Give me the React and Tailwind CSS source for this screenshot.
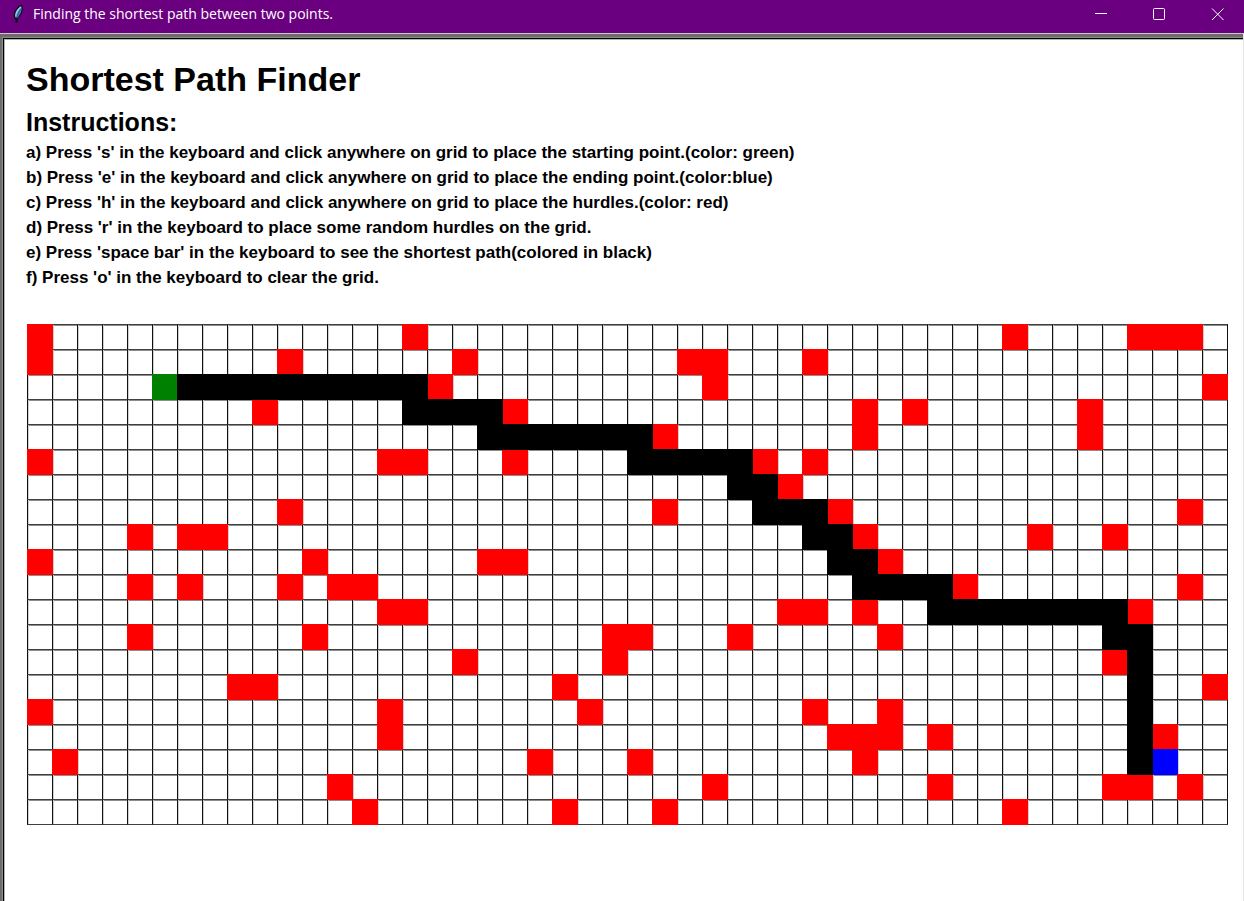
const COLUMNS = 48;

// One list per row of [column, symbols]: "#" hurdle, "*" path, "S" start, "E" end.
const RUNS = [
  [[0, "#"], [15, "#"], [39, "#"], [44, "###"]],
  [[0, "#"], [10, "#"], [17, "#"], [26, "##"], [31, "#"]],
  [[5, "S**********#"], [27, "#"], [47, "#"]],
  [[9, "#"], [15, "****#"], [33, "#"], [35, "#"], [42, "#"]],
  [[18, "*******#"], [33, "#"], [42, "#"]],
  [[0, "#"], [14, "##"], [19, "#"], [24, "*****#"], [31, "#"]],
  [[28, "**#"]],
  [[10, "#"], [25, "#"], [29, "***#"], [46, "#"]],
  [[4, "#"], [6, "##"], [31, "**#"], [40, "#"], [43, "#"]],
  [[0, "#"], [11, "#"], [18, "##"], [32, "**#"]],
  [[4, "#"], [6, "#"], [10, "#"], [12, "##"], [33, "****#"], [46, "#"]],
  [[14, "##"], [30, "##"], [33, "#"], [36, "********#"]],
  [[4, "#"], [11, "#"], [23, "##"], [28, "#"], [34, "#"], [43, "**"]],
  [[17, "#"], [23, "#"], [43, "#*"]],
  [[8, "##"], [21, "#"], [44, "*"], [47, "#"]],
  [[0, "#"], [14, "#"], [22, "#"], [31, "#"], [34, "#"], [44, "*"]],
  [[14, "#"], [32, "###"], [36, "#"], [44, "*#"]],
  [[1, "#"], [20, "#"], [24, "#"], [33, "#"], [44, "*E"]],
  [[12, "#"], [27, "#"], [36, "#"], [43, "##"], [46, "#"]],
  [[13, "#"], [21, "#"], [25, "#"], [39, "#"]],
];

const CELLS = RUNS.flatMap((runs) => {
  const row = Array(COLUMNS).fill(" ");
  runs.forEach(([start, symbols]) => {
    [...symbols].forEach((symbol, i) => {
      row[start + i] = symbol;
    });
  });
  return row;
});

const CELL_STYLES = {
  " ": "border-x-[#101010] border-y-[#404040] shadow-[inset_1px_0_0_#d0d0d0,inset_0_1px_0_#8c8c8c]",
  "#": "z-10 border-[#ff0000] bg-[#ff0000]",
  E: "z-10 border-[#0000ff] bg-[#0000ff]",
  S: "z-10 border-[#008000] bg-[#008000]",
  "*": "z-20 border-black bg-black",
};

const INSTRUCTIONS = [
  "a) Press 's' in the keyboard and click anywhere on grid to place the starting point.(color: green)",
  "b) Press 'e' in the keyboard and click anywhere on grid to place the ending point.(color:blue)",
  "c) Press 'h' in the keyboard and click anywhere on grid to place the hurdles.(color: red)",
  "d) Press 'r' in the keyboard to place some random hurdles on the grid.",
  "e) Press 'space bar' in the keyboard to see the shortest path(colored in black)",
  "f) Press 'o' in the keyboard to clear the grid.",
];

function FeatherIcon() {
  return (
    <svg width="12" height="20" viewBox="0 0 12 20" aria-hidden="true">
      <path d="M9.8 0.5 C11.6 3 11 8 8.4 11.5 L6 15 L5.2 19 L3.6 19 L3.4 16 C0.6 13 1.4 8 4 5 C5.6 2.8 7.8 1 9.8 0.5Z" fill="#15101f" />
      <path d="M9.2 2 C10.2 5 9.2 8.3 7.4 11 L5.2 14.2 L3.4 13.6 C2.4 10.5 3.6 7.5 5.4 5.2Z" fill="#4a86c5" />
      <path d="M8.7 2.8 L6 6.2 C4.3 8.5 3.6 10.5 3.8 12.5" fill="none" stroke="#b9d8ee" strokeWidth="1.1" />
      <path d="M8.4 5 L4.4 14" fill="none" stroke="#1d3d66" strokeWidth="0.6" />
    </svg>
  );
}

function WindowButton({ label, children }) {
  return (
    <button type="button" aria-label={label} className="flex h-7 w-[52px] items-center justify-center">
      <svg width="14" height="14" viewBox="0 0 14 14" fill="none" stroke="#ffffff" strokeWidth="1">
        {children}
      </svg>
    </button>
  );
}

function TitleBar() {
  return (
    <header className="flex h-[33px] items-start bg-[#6a0080] text-white">
      <div className="flex h-7 flex-1 items-center gap-[9px] pl-3">
        <FeatherIcon />
        <span className="font-['Open_Sans',sans-serif] text-[14px] leading-5">
          Finding the shortest path between two points.
        </span>
      </div>
      <div className="flex gap-[6px]">
        <WindowButton label="Minimize">
          <path d="M0 6.5H12" />
        </WindowButton>
        <WindowButton label="Maximize">
          <rect x="0.5" y="1.5" width="11" height="11" rx="1" />
        </WindowButton>
        <WindowButton label="Close">
          <path d="M1 1.5L12.5 13M12.5 1.5L1 13" />
        </WindowButton>
      </div>
    </header>
  );
}

function Board() {
  return (
    <div className="grid w-max auto-rows-[25px] grid-cols-[repeat(48,25px)] pr-px pb-px">
      {CELLS.map((symbol, i) => (
        <div key={i} className={`relative -mr-px -mb-px border ${CELL_STYLES[symbol]}`} />
      ))}
    </div>
  );
}

export default function App() {
  return (
    <div className="flex min-h-screen flex-col overflow-x-hidden bg-white font-['Liberation_Sans',Arial,sans-serif] text-black">
      <TitleBar />
      <div className="flex flex-1 flex-col border-t border-r border-t-[#c8c8c8] border-r-[#e6e6e6]">
        <div className="flex flex-1 flex-col border-t-[3px] border-l-2 border-[#6c6c6c]">
          <div className="flex flex-1 flex-col border-t border-l border-[#8c8c8c]">
            <main className="flex-1 border-t border-l border-black pt-5 pl-[22px] shadow-[inset_1px_1px_0_#b4b4b4]">
              <h1 className="text-[34px] leading-10 font-bold">Shortest Path Finder</h1>
              <h2 className="pt-[6px] text-[25px] leading-[34px] font-bold">Instructions:</h2>
              <ul className="pt-px pb-[34px] text-[17px] leading-[25px] font-bold">
                {INSTRUCTIONS.map((line) => (
                  <li key={line}>{line}</li>
                ))}
              </ul>
              <div className="pl-px">
                <Board />
              </div>
            </main>
          </div>
        </div>
      </div>
    </div>
  );
}
